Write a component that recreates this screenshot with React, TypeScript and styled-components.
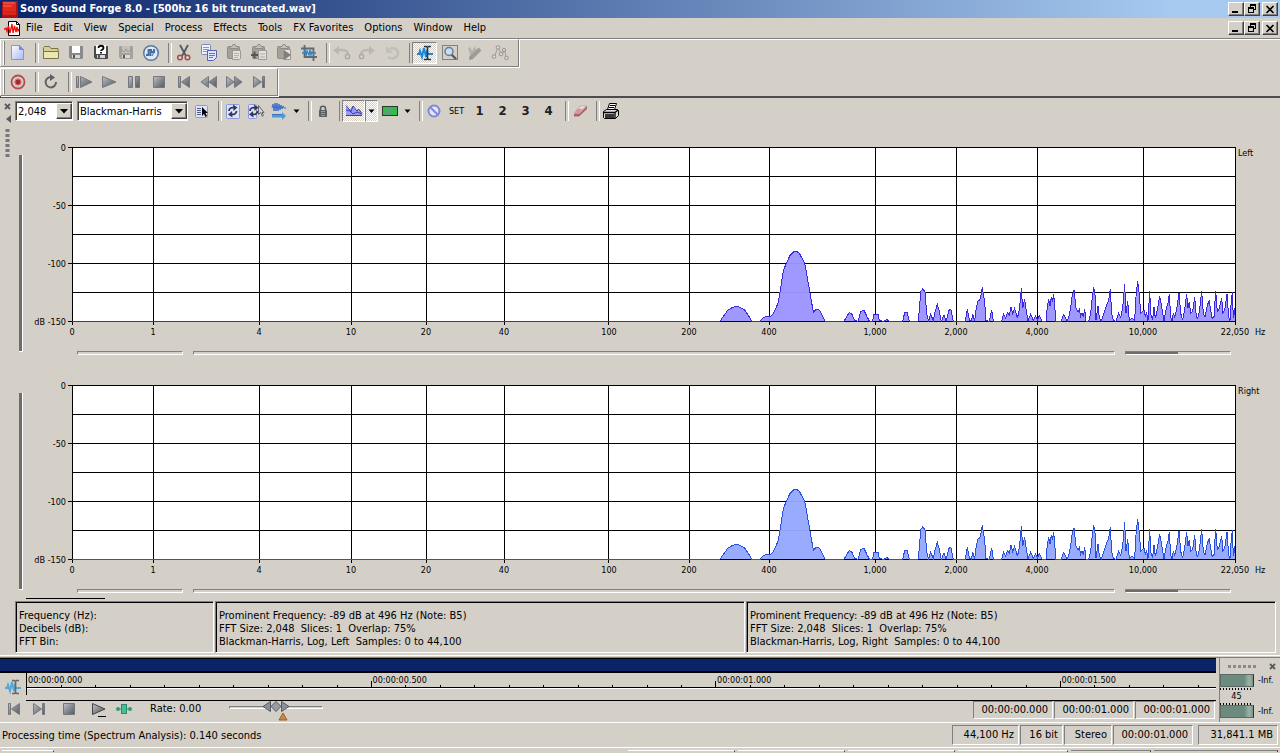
import React from "react";
import styled, { createGlobalStyle, css } from "styled-components";

const FACE = "#d4d0c8";
const SHADOW = "#808080";
const DARK = "#404040";

const GlobalStyle = createGlobalStyle`
  * { box-sizing: border-box; }
  body {
    margin: 0;
    background: ${FACE};
    color: #000;
    font: 11px/13px "DejaVu Sans Condensed", "DejaVu Sans", sans-serif;
  }
  button, input, select { font: inherit; color: inherit; margin: 0; padding: 0; border: 0; background: none; border-radius: 0; }
  svg { display: block; flex: none; }
`;

/* ---------- window frame ---------- */

const Window = styled.div`
  display: flex;
  flex-direction: column;
  min-height: 100vh;
  overflow: hidden;
`;

const TitleBar = styled.header`
  display: flex;
  align-items: center;
  gap: 2px;
  height: 18px;
  padding: 0 2px 0 1px;
  background: linear-gradient(to right, #0a246a, #a6caf0 92%);
  color: #fff;
`;

const Title = styled.h1`
  flex: 1;
  margin: 0;
  font: bold 11px/18px "DejaVu Sans Condensed", "DejaVu Sans", sans-serif;
  white-space: nowrap;
`;

const MenuBar = styled.nav`
  display: flex;
  align-items: center;
  height: 21px;
  padding: 0 2px 0 3px;
  border-bottom: 1px solid ${SHADOW};
`;

const MenuItem = styled.button`
  padding: 0 5px;
  line-height: 20px;
  white-space: nowrap;
`;

const MenuItems = styled.div`
  display: flex;
  flex: 1;
  gap: 1px;
`;

const CaptionButtons = styled.div`
  display: flex;
  color: #000;
`;

const CaptionButton = styled.button<{ $apart?: boolean }>`
  display: flex;
  align-items: center;
  justify-content: center;
  width: 16px;
  height: 14px;
  margin-left: ${(p) => (p.$apart ? 2 : 0)}px;
  background: ${FACE};
  border: 1px solid;
  border-color: #fff ${DARK} ${DARK} #fff;
  box-shadow: inset -1px -1px ${SHADOW};
`;

/* ---------- toolbars ---------- */

const ToolbarArea = styled.div`
  display: flex;
  flex-direction: column;
  align-items: flex-start;
  gap: 1px;
  border-bottom: 2px solid #4c4c4e;
  box-shadow: inset 0 1px #fff;
`;

const Toolbar = styled.div`
  display: flex;
  align-items: center;
  height: 28px;
  padding: 0 6px 0 2px;
  border: 1px solid;
  border-color: #fff ${SHADOW} ${SHADOW} #fff;
  box-shadow: 1px 1px #fff;
`;

const Grip = styled.span`
  width: 2px;
  height: 24px;
  border-left: 1px solid #fff;
  border-right: 1px solid ${SHADOW};
`;

const Separator = styled.span`
  flex: none;
  width: 8px;
  height: 20px;
  &::before {
    content: "";
    display: block;
    width: 2px;
    height: 100%;
    margin-left: 5px;
    border-left: 1px solid ${SHADOW};
    border-right: 1px solid #fff;
  }
`;

const pressed = css`
  border: 1px solid;
  border-color: ${SHADOW} #fff #fff ${SHADOW};
  background: repeating-conic-gradient(#fff 0 25%, ${FACE} 0 50%) 0 0 / 2px 2px;
`;

const ToolButton = styled.button<{ $width?: number; $pressed?: boolean }>`
  display: flex;
  flex: none;
  align-items: center;
  justify-content: center;
  width: ${(p) => p.$width ?? 25}px;
  height: 22px;
  ${(p) => p.$pressed && pressed}
`;

const SetLabel = styled.span`
  font-size: 9px;
`;

const PresetLabel = styled.span`
  font: bold 13px/16px "DejaVu Sans Condensed", "DejaVu Sans", sans-serif;
  color: #222;
`;

const AnalysisBar = styled.div`
  display: flex;
  align-items: center;
  height: 26px;
`;

const SelectBox = styled.div<{ $width: number }>`
  position: relative;
  width: ${(p) => p.$width}px;
  height: 20px;
  border: 1px solid;
  border-color: ${SHADOW} #fff #fff ${SHADOW};
  box-shadow: inset 1px 1px ${DARK};
  background: #fff;
  &:first-child { margin-right: 4px; }
`;

const Select = styled.select`
  width: 100%;
  height: 18px;
  padding: 0 0 0 2px;
  appearance: none;
  outline: none;
`;

const SelectArrow = styled.span`
  position: absolute;
  top: 1px;
  right: 0;
  display: flex;
  align-items: center;
  justify-content: center;
  width: 16px;
  height: 16px;
  background: ${FACE};
  border: 1px solid;
  border-color: #fff ${DARK} ${DARK} #fff;
  box-shadow: inset -1px -1px ${SHADOW};
  pointer-events: none;
`;

/* ---------- spectrum window ---------- */

const Spectrum = styled.main`
  display: flex;
  border-bottom: 1px solid #fff;
`;

const DockEdge = styled.div`
  display: flex;
  flex-direction: column;
  align-items: center;
  gap: 5px;
  width: 15px;
  padding-top: 5px;
`;

const SpectrumBody = styled.div`
  flex: 1;
  min-width: 0;
`;

const Channel = styled.section`
  display: flex;
  height: 238px;
`;

const VerticalRange = styled.input`
  appearance: none;
  flex: none;
  width: 4px;
  height: 197px;
  margin: 31px 49px 0 4px;
  background: #706c6c;
  border-right: 1px solid #fff;
  border-bottom: 1px solid #fff;
  &::-webkit-slider-thumb { appearance: none; width: 1px; height: 1px; }
`;

const PlotColumn = styled.div`
  flex: 1;
  min-width: 0;
  padding: 23px 45px 0 0;
`;

const Plot = styled.svg`
  width: 100%;
  height: 175px;
  overflow: visible;
  font-size: 9px;
`;

const RangeRow = styled.div`
  display: flex;
  gap: 10px;
  padding: 29px 4px 0 5px;
`;

const HorizontalRange = styled.input<{ $grow?: boolean; $filled?: number }>`
  appearance: none;
  flex: ${(p) => (p.$grow ? "1 1 0" : "0 0 106px")};
  min-width: 0;
  height: 4px;
  border: 1px solid;
  border-color: ${SHADOW} #fff #fff ${SHADOW};
  background: linear-gradient(to right, #706c6c ${(p) => p.$filled ?? 0}%, ${FACE} 0);
  &::-webkit-slider-thumb { appearance: none; width: 1px; height: 1px; }
`;

const InfoRow = styled.div`
  display: flex;
  gap: 1px;
  margin: 0 4px 2px 0;
`;

const InfoRule = styled.div`
  width: 79px;
  height: 1px;
  margin: -2px 0 2px 11px;
  background: #000;
`;

const InfoPane = styled.div<{ $fixed?: boolean }>`
  flex: ${(p) => (p.$fixed ? "0 0 199px" : "1 1 0")};
  height: 52px;
  padding: 7px 0 0 3px;
  border: 1px solid;
  border-color: ${SHADOW} #fff #fff ${SHADOW};
  box-shadow: inset 1px 1px #000;
  white-space: pre;
  overflow: hidden;
`;

/* ---------- data window strip ---------- */

const DataStrip = styled.section`
  display: flex;
  margin-top: 1px;
  border-top: 1px solid ${SHADOW};
  border-bottom: 1px solid #fff;
`;

const Timeline = styled.div`
  flex: 1;
  min-width: 0;
`;

const Overview = styled.div`
  height: 15px;
  background: #0a246a;
  border-top: 1px solid #000;
  border-bottom: 2px solid #000;
`;

const RulerRow = styled.div`
  display: flex;
  height: 28px;
`;

const RulerTool = styled.button`
  display: flex;
  align-items: center;
  justify-content: center;
  width: 26px;
`;

const RulerTrack = styled.div`
  flex: 1;
  min-width: 0;
  border-bottom: 1px solid #000;
`;

const Ruler = styled.svg`
  width: 100%;
  height: 27px;
  font-size: 9px;
`;

const Transport = styled.div`
  display: flex;
  align-items: flex-start;
  height: 21px;
  padding: 0 1px;
`;

const TransportButton = styled.button<{ $gap?: number }>`
  display: flex;
  align-items: center;
  justify-content: center;
  width: 25px;
  height: 15px;
  margin-right: ${(p) => p.$gap ?? 0}px;
`;

const Rate = styled.label`
  display: flex;
  flex: 1;
  gap: 28px;
  margin-left: 14px;
  line-height: 16px;
  white-space: nowrap;
`;

const RateSlider = styled.span`
  position: relative;
  width: 94px;
  height: 21px;
`;

const RateInput = styled.input`
  appearance: none;
  display: block;
  width: 94px;
  height: 3px;
  margin-top: 5px;
  border: 1px solid;
  border-color: ${SHADOW} #fff #fff ${SHADOW};
  &::-webkit-slider-thumb { appearance: none; width: 1px; height: 1px; }
`;

const RateThumb = styled.svg`
  position: absolute;
  left: 33px;
  top: 0;
  pointer-events: none;
`;

const Readout = styled.output<{ $width: number; $height?: number; $gap?: number }>`
  flex: none;
  width: ${(p) => p.$width}px;
  height: ${(p) => p.$height ?? 18}px;
  margin-left: ${(p) => p.$gap ?? 1}px;
  padding-right: 4px;
  border: 1px solid;
  border-color: ${SHADOW} #fff #fff ${SHADOW};
  line-height: ${(p) => (p.$height ?? 18) - 2}px;
  text-align: right;
  white-space: nowrap;
`;

const Meters = styled.aside`
  display: flex;
  flex-direction: column;
  width: 61px;
  margin-left: 3px;
  border-left: 1px solid ${SHADOW};
  font-size: 9px;
`;

const MeterHead = styled.div`
  display: flex;
  align-items: center;
  justify-content: space-between;
  height: 16px;
  padding: 0 4px 0 7px;
`;

const MeterRow = styled.div`
  display: flex;
  align-items: center;
  gap: 4px;
  height: 13px;
`;

const MeterBar = styled.span`
  width: 34px;
  height: 13px;
  background: linear-gradient(to right, #6d8a7e 72%, #9db3a8 88%, #7f9488);
  border: 1px solid;
  border-color: #5c6c64 #303030 #5c6c64 #5c6c64;
`;

const MeterScale = styled.div`
  width: 33px;
  height: 18px;
  padding-top: 4px;
  text-align: center;
  line-height: 11px;
  background:
    repeating-linear-gradient(to right, #000 0 1px, transparent 1px 3px) 0 1px / 100% 2px no-repeat,
    repeating-linear-gradient(to right, #000 0 1px, transparent 1px 3px) 0 100% / 100% 2px no-repeat;
`;

const StatusBar = styled.footer`
  display: flex;
  align-items: center;
  height: 25px;
  padding: 0 2px;
  border-bottom: 1px solid #fff;
`;

const StatusText = styled.span`
  flex: 1;
  white-space: nowrap;
`;

const Taskbar = styled.div`
  display: flex;
  gap: 3px;
  height: 4px;
  padding: 2px 2px 0 2px;
  overflow: hidden;
`;

const TaskSlot = styled.span<{ $width?: number; $tone?: "plain" | "alert" | "tray" }>`
  flex: ${(p) => (p.$width ? `0 0 ${p.$width}px` : "1 1 0")};
  height: 4px;
  ${(p) =>
    p.$tone &&
    css`
      background: ${p.$tone === "alert" ? "#f3dc7a" : FACE};
      border-top: 1px solid ${p.$tone === "plain" ? "#fff" : SHADOW};
      border-right: 1px solid ${DARK};
    `}
`;

/* ---------- icons ---------- */

type IconProps = { children: React.ReactNode; w?: number; h?: number };
const Icon = ({ children, w = 18, h = 18 }: IconProps) => (
  <svg width={w} height={h} viewBox={`0 0 ${w} ${h}`} fill="none" aria-hidden="true">
    {children}
  </svg>
);

const SharedDefs = styled.svg`
  position: absolute;
  width: 0;
  height: 0;
`;

const Gradients = () => (
  <SharedDefs aria-hidden="true">
    <defs>
      <linearGradient id="steel" x1="0" y1="0" x2="1" y2="1">
        <stop offset="0" stopColor="#c0c3c8" />
        <stop offset="0.5" stopColor="#868a90" />
        <stop offset="1" stopColor="#55585e" />
      </linearGradient>
      <linearGradient id="page" x1="0" y1="0" x2="1" y2="1">
        <stop offset="0" stopColor="#ffffff" />
        <stop offset="1" stopColor="#a9b8f4" />
      </linearGradient>
    </defs>
  </SharedDefs>
);

const steel = { fill: "url(#steel)", stroke: "#74777d", strokeWidth: 1 };

const AppIcon = () => (
  <Icon w={17} h={17}>
    <rect x="1" y="0" width="16" height="17" rx="1" fill="#b01010" />
    <rect x="2" y="1" width="13" height="13" fill="#e02a20" />
    <path d="M2 2h12M2 5h9" stroke="#f46a58" />
    <path d="M3 11h12M3 14h12" stroke="#c41812" />
  </Icon>
);
const DocIcon = () => (
  <Icon w={18} h={17}>
    <path d="M5.500 1.500h8l3 3v11h-11z" fill="#fff" stroke="#000" />
    <path d="M13.500 1.500v3h3" stroke="#000" />
    <path d="M1 9h2V7.500l1 4L5.500 6l1.500 7L9 4l1 9 1.500-7 1.500 6 1-5 1 4 1-2" stroke="#f01010" strokeWidth="1.300" />
  </Icon>
);
const Minimize = () => <Icon w={10} h={10}><path d="M1 8h6" stroke="#000" strokeWidth="2" /></Icon>;
const Restore = () => (
  <Icon w={10} h={10}>
    <g shapeRendering="crispEdges">
      <path d="M3 0h6v6H7V5h1V2H4v1H3z" fill="#000" />
      <path d="M1 3h6v6H1zM2 5v3h4V5z" fill="#000" fillRule="evenodd" />
    </g>
  </Icon>
);
const Close = () => <Icon w={10} h={9}><path d="M1.500 1l7 7M8.500 1l-7 7" stroke="#000" strokeWidth="1.600" /></Icon>;

const NewIcon = () => (
  <Icon>
    <path d="M2.500 1.500h8l4 4v10h-12z" fill="url(#page)" stroke="#8794cf" />
    <path d="M10.500 1.500v4h4" fill="#7b8fe0" stroke="#7688cf" />
  </Icon>
);
const OpenIcon = () => (
  <Icon>
    <path d="M1.500 14.500v-11l1-1h5l1.500 2h7v10z" fill="#d8cf96" stroke="#7c7444" />
    <path d="M1.500 7.500h15v7h-15z" fill="#ece5b4" stroke="#7c7444" />
  </Icon>
);
const Floppy = ({ color = "#8a8a8a", label = "#fff" }: { color?: string; label?: string }) => (
  <>
    <path d="M2.500 2.500h13v12h-12l-1-1z" fill={color} stroke={color} />
    <path d="M5 2h8v7H5z" fill={label} />
    <path d="M5 11h8v3H5z" fill="#d8d8d8" />
    <path d="M6 11h2v3H6z" fill="#555" />
  </>
);
const SaveIcon = () => <Icon><Floppy /></Icon>;
const SaveAsIcon = () => (
  <Icon>
    <Floppy color="#4a4a4a" />
    <rect x="4" y="1" width="10" height="9" fill="#fff" />
    <path d="M6.500 4c0-3 5-3 5 0 0 2-2.500 1.500-2.500 3M9 8v1.500" stroke="#000" strokeWidth="1.800" />
  </Icon>
);
const SaveAllIcon = () => (
  <Icon>
    <Floppy color="#a4a29e" label="#c4c1ba" />
    <path d="M3 7l2-1 2 2 2-3 2 3 2-2 2 1" stroke="#989692" />
  </Icon>
);
const RenderIcon = () => (
  <Icon>
    <circle cx="9" cy="9" r="7.300" fill="#dfe8f4" stroke="#5878a0" strokeWidth="1.500" />
    <path d="M4 11h2.500V6H10M8.500 12V8H12V5" stroke="#3f6ea5" strokeWidth="1.800" />
    <path d="M10 12l3-6" stroke="#3f6ea5" />
  </Icon>
);
const CutIcon = () => (
  <Icon>
    <path d="M5 1l6 11M13 1L7 12" stroke="#55585e" strokeWidth="1.800" />
    <circle cx="5" cy="13.500" r="2.300" stroke="#a0504a" strokeWidth="1.500" />
    <circle cx="12.500" cy="13.500" r="2.300" stroke="#a0504a" strokeWidth="1.500" />
  </Icon>
);
const CopyIcon = () => (
  <Icon>
    <rect x="1.500" y="0.500" width="9" height="10" rx="1" fill="#eef1ff" stroke="#7c88b8" />
    <path d="M3 3.500h6M3 5.500h6M3 7.500h4" stroke="#8a96c8" />
    <path d="M7.500 6.500h9v7l-3 3h-6z" fill="#dfe5ff" stroke="#5566b0" />
    <path d="M9 9.500h6M9 11.500h6M9 13.500h4" stroke="#6677c0" />
  </Icon>
);
const Clipboard = () => (
  <>
    <rect x="2.500" y="2.500" width="12" height="12" rx="1" fill="#a5a29c" stroke="#8f8c87" />
    <path d="M5 4.500v-2h2l1-2h2l1 2h2v2z" fill="#c5c2bb" stroke="#8f8c87" />
  </>
);
const PasteIcon = () => (
  <Icon><Clipboard /><path d="M7.500 6.500h8v8l-1 1h-7z" fill="#e4e1da" stroke="#9b9893" /><path d="M9 9.500h5M9 11.500h5M9 13.500h4" stroke="#b5b2ac" /></Icon>
);
const PasteMixIcon = () => (
  <Icon><Clipboard /><path d="M8.500 6.500h8v9h-8z" fill="#e4e1da" stroke="#9b9893" /><path d="M10 10h5M10 13h5" stroke="#aaa" /><path d="M1 11h7M4.500 7.500v7" stroke="#555" strokeWidth="2" /></Icon>
);
const PastePlayIcon = () => (
  <Icon><Clipboard /><path d="M8.500 5.500h7v10h-7z" fill="#e4e1da" stroke="#9b9893" /><path d="M9 6l7 5-7 5z" fill="#807e7a" /></Icon>
);
const TrimIcon = () => (
  <Icon>
    <path d="M4.500 1v12H17M1 4.500h12.500V17" stroke="#66696e" strokeWidth="1.800" />
    <path d="M2 9h2l1-3 1 6 1-5 2 4 1-5 1 5 1-3 1 1h3" stroke="#2d86c4" strokeWidth="1.300" />
  </Icon>
);
const UndoIcon = () => (
  <Icon>
    <path d="M5 6h4c4 0 6 2 6 5" stroke="#bbb8b1" strokeWidth="2.600" />
    <path d="M0 6.500L6 2v9z" fill="#bbb8b1" />
    <circle cx="14.500" cy="12.500" r="2.200" fill={FACE} stroke="#aaa7a1" strokeWidth="1.300" />
  </Icon>
);
const RedoIcon = () => (
  <Icon>
    <path d="M12 6H9c-4 0-6 2-6 5" stroke="#bbb8b1" strokeWidth="2.600" />
    <path d="M17 6.500L11 2v9z" fill="#bbb8b1" />
    <circle cx="3.500" cy="12.500" r="2.200" fill={FACE} stroke="#aaa7a1" strokeWidth="1.300" />
  </Icon>
);
const RepeatIcon = () => (
  <Icon><path d="M7 5c4-2 8 0 8 4 0 5-6 7-10 4" stroke="#c2bfb8" strokeWidth="2.600" /><path d="M3 2v7h7z" fill="#c2bfb8" /></Icon>
);
const EditToolIcon = ({ faded = false }: { faded?: boolean }) => (
  <Icon>
    <path d="M1 10h2l1-3 2 6 2-9 2 9 1-5 1 2h5" stroke={faded ? "#56a8d8" : "#1f86d8"} strokeWidth="2" />
    <path d="M8 2.500h2.500l1 1 1-1H15M11.500 3v12M8 15.500h2.500l1-1 1 1H15" stroke={faded ? "#666" : "#26394a"} strokeWidth="1.600" />
  </Icon>
);
const MagnifyIcon = () => (
  <Icon>
    <rect x="1.500" y="1.500" width="15" height="14" stroke="#333" strokeDasharray="1 1" />
    <path d="M10 10l5 5" stroke="#555b68" strokeWidth="2.400" />
    <circle cx="8" cy="7.500" r="4" fill="#c6ddf8" stroke="#6c7890" strokeWidth="1.500" />
  </Icon>
);
const PencilIcon = () => (
  <Icon>
    <path d="M2 4l2-1 2 4 3-5 1 4 3-2-7 9-3 1 1-4z" fill="#b5b2ac" />
    <path d="M5 14l9-9" stroke="#a09d98" strokeWidth="4" />
    <path d="M3 16l1-4 3 3z" fill="#96938e" />
  </Icon>
);
const EnvelopeIcon = () => (
  <Icon>
    <path d="M3 13L7 4l4 6 3-3 1 7" stroke="#a09d98" />
    <g fill="#ddd9d1" stroke="#96938e">
      <circle cx="3" cy="12.500" r="1.800" /><circle cx="7" cy="3.500" r="1.800" /><circle cx="10" cy="10" r="1.800" />
      <circle cx="13" cy="6" r="1.600" /><circle cx="15.500" cy="14" r="1.800" />
    </g>
  </Icon>
);

const RecordIcon = () => (
  <Icon><circle cx="9" cy="9" r="6.500" stroke="#b84a50" strokeWidth="1.800" /><circle cx="9" cy="9" r="3.200" fill="#a82830" stroke="#d98a8c" /></Icon>
);
const LoopIcon = () => (
  <Icon><path d="M9 4A5.200 5.200 0 1 0 14 9" stroke="#5e6166" strokeWidth="2" /><path d="M8 1l5 3.500L8 8z" fill="#5e6166" /></Icon>
);
const PlayAllIcon = () => <Icon><path d="M1.500 3.500h2v11h-2zM5.500 3.500L17 9 5.500 14.500z" {...steel} /></Icon>;
const PlayIcon = () => <Icon><path d="M2.500 3.500L16 9 2.500 14.500z" {...steel} /></Icon>;
const PauseIcon = () => <Icon><path d="M3.500 3.500h4v11h-4zM10.500 3.500h4v11h-4z" {...steel} /></Icon>;
const StopIcon = () => <Icon><path d="M3.500 3.500h11v11h-11z" {...steel} /></Icon>;
const StartIcon = () => <Icon><path d="M3.500 3.500h2v11h-2zM14.500 3.500v11L6.500 9z" {...steel} /></Icon>;
const RewindIcon = () => <Icon><path d="M8.500 3.500v11L1 9zM16.500 3.500v11L9 9z" {...steel} /></Icon>;
const ForwardIcon = () => <Icon><path d="M1.500 3.500v11L9 9zM9.500 3.500v11L17 9z" {...steel} /></Icon>;
const EndIcon = () => <Icon><path d="M12.500 3.500h2v11h-2zM3.500 3.500v11L11.500 9z" {...steel} /></Icon>;
const PlayOnceIcon = () => (
  <Icon><path d="M2.500 3.500L15 9 2.500 14.500z" {...steel} stroke="#444" /><path d="M8 16.500h8" stroke="#000" /></Icon>
);
const ScrubIcon = () => (
  <Icon>
    <path d="M3 9h12" stroke="#2f9a78" /><circle cx="3" cy="9" r="2" fill="#2f9a78" /><circle cx="15" cy="9" r="2" fill="#2f9a78" />
    <rect x="6.500" y="4.500" width="5" height="9" fill="#42c09a" stroke="#2f8a6c" />
  </Icon>
);

const SettingsIcon = () => (
  <Icon>
    <rect x="3.500" y="3.500" width="12" height="12" rx="1" fill="#dde2ff" stroke="#8b97dd" />
    <path d="M5 6.500h4M5 8.500h4M5 10.500h4M5 12.500h4" stroke="#555c88" />
    <path d="M10 5v9l2-2 1.500 3 1.500-1-1.500-3H16z" fill="#000" />
  </Icon>
);
const CycleArrows = () => (
  <>
    <path d="M5 9c0-3 3-4 5-3M12.500 9c0 3-3 4-5 3" stroke="#333a50" strokeWidth="1.800" />
    <path d="M9 2.500l4.500 3L9.500 9zM8.500 15.500L4 12.500 8 9z" fill="#333a50" />
  </>
);
const RefreshIcon = () => (
  <Icon><rect x="2.500" y="2.500" width="13" height="14" rx="1" fill="#dde2ff" stroke="#8b97dd" /><CycleArrows /></Icon>
);
const AutoRefreshIcon = () => (
  <Icon>
    <rect x="1.500" y="2.500" width="8" height="14" rx="1" fill="#dde2ff" stroke="#8b97dd" />
    <g transform="translate(-2 0)"><CycleArrows /></g>
    <path d="M11.500 3.500v9l2-2 2 4 1-1-1.500-3h2z" fill="#d8d5cf" stroke="#66646a" />
  </Icon>
);
const RealtimeIcon = () => (
  <Icon>
    <path d="M2 6l1-4 1 7 1-8 1 8 1-8 1 8 1-7 1 6 1-5 1 4 1-3 1 2h2" stroke="#3a6cc8" />
    <path d="M2 12.500h10v-2.500l4 4-4 4v-2.500H2z" fill="#4f9ade" />
    <path d="M2 12.500h10" stroke="#3976bd" />
  </Icon>
);
const LockIcon = () => (
  <Icon><path d="M6.500 9V6.500c0-3 5-3 5 0V9" stroke="#55585c" strokeWidth="1.600" /><rect x="5" y="8" width="8" height="7" rx="1" fill="#5b5e63" /><path d="M7 9.500h4M7 11.500h4M7 13.500h4" stroke="#999ca0" /></Icon>
);
const GraphIcon = () => (
  <Icon>
    <path d="M1 14V4l4 4 2-4 5 5 2-1 3 4v2z" fill="#9c9bf2" />
    <path d="M1 3.500l5 6 2-5.500 4 5 1.500-2L17 11.500M1 8l4 1 3 3 4-2 5 2M1 13.500h16" stroke="#3a3aae" />
  </Icon>
);
const SonogramIcon = () => (
  <Icon>
    <rect x="1.500" y="4.500" width="15" height="9" fill="#2fc04a" stroke="#2a3a2a" />
    <path d="M3 11.500l3-2 2 1 3-3 4-1M5 12.500l4-1 2-2h2M4 7.500l4-1" stroke="#8a78a8" />
  </Icon>
);
const CaretIcon = () => <Icon w={7} h={6}><path d="M0.500 1.500h6L3.500 5z" fill="#000" /></Icon>;
const NoneIcon = () => <Icon><circle cx="9" cy="9" r="5.500" fill="#e4e6fa" stroke="#8088d8" strokeWidth="2" /><path d="M5 5l8 8" stroke="#8088d8" strokeWidth="2" /></Icon>;
const EraserIcon = () => (
  <Icon><path d="M2.500 12l3.500-5h5.500L8 12z" fill="#dc949c" /><path d="M6 7l4-3h6l-4.500 3z" fill="#f2eaec" stroke="#c0a8ae" /><path d="M8 12l8-8v3l-8 7.500H3V12z" fill="#a8646e" /></Icon>
);
const PrintIcon = () => (
  <Icon>
    <path d="M5.500 7.500l2-6h7l-2 6z" fill="#fff" stroke="#000" />
    <path d="M8 3.500h5M7 5.500h5" stroke="#000" />
    <path d="M1.500 9.500l3-2h11l1 1v5l-3 3h-11l-1-1z" fill="#ddd" stroke="#000" />
    <path d="M2 10.500h11v6M13 10.500l3-2.500M3 13h9M3 15h9" stroke="#000" strokeWidth="1.300" />
  </Icon>
);

/* ---------- chart ---------- */

// Analysed levels as "x,y" pairs at three units per pixel; y grows down to FLOOR.
const FLOOR = 274;
const LOW_BAND =
  "60,274 68,262 84,240 96,233 110,229 122,233 134,240 146,258 156,274 180,274 190,263 198,259 214,258 222,247 234,220 238,200 250,122 258,102 270,76 282,64 290,64 298,70 314,100 318,120 340,246 346,240 352,237 360,243 374,272 376,274 432,274 440,260 448,248 456,253 464,271 474,274 482,245 492,241 500,258 508,273 518,273 522,253 534,253 538,272 552,274 560,268 568,274 608,274 614,248 622,248 628,274 654,274 658,240 662,185 668,177 675,185 680,250 686,274 692,252 700,273 704,250 712,222 718,245 724,274 732,255 738,274 748,238 753,240 760,274";
const MID_BAND = "796,274 802,238 808,270 814,274 818,252 824,272 828,240 834,212 838,212";
const HIGH_BAND =
  "62,200 67,172 74,215 78,272 88,274 95,240 100,274 125,274 131,252 137,265 142,248 148,255 153,232 158,252 164,235 172,265 178,240 184,175 188,235 194,208 200,250 204,272 212,252 220,272 226,258 232,270 238,258 246,274 258,274 262,230 266,208 270,228 274,200 277,215 281,193 285,240 288,274 304,274 310,254 316,262 322,274 326,262 332,235 336,200 342,180 348,235 354,245 358,238 362,258 366,248 370,260 374,236 378,274 386,274 392,250 397,200 401,172 405,195 408,270 414,228 418,265 424,274 432,250 440,225 446,210 451,178 455,250 460,272 468,274 476,250 482,262 488,235 494,163 498,250 503,213 508,272 516,265 524,272 528,200 533,153 538,195 542,250 548,245 552,240 556,258 560,248 564,272 569,184 573,255 578,270 582,230 586,265 592,240 599,199 604,225 612,272 620,230 624,220 628,193 632,260 636,274 640,250 644,262 650,240 657,188 662,250 668,270 674,240 680,192 684,235 688,215 692,250 698,245 704,202 708,250 712,268 718,245 725,184 730,250 735,262 742,225 748,213 752,240 756,265 762,260 767,184 772,245 778,235 785,204 789,250 794,240 801,192 806,260 810,272 814,210 817,187 820,265 824,235 826,274";

const band = (points: string, start: number) =>
  points.split(" ").map((pair) => {
    const [x, y] = pair.split(",").map(Number);
    return `${x + start} ${523 - (FLOOR - y)}`;
  });

const SPECTRUM_PATH = `M0 523L${[
  ...band(LOW_BAND, 1884),
  ...band(MID_BAND, 1884),
  ...band(HIGH_BAND, 2664),
].join("L")}L3489 523`;

const SPAN = 1163;
const FREQUENCIES: [number, string][] = [
  [0, "0"], [81, "1"], [187, "4"], [279, "10"], [354, "20"], [432, "40"], [537, "100"],
  [617, "200"], [697, "400"], [803, "1,000"], [884, "2,000"], [965, "4,000"], [1071, "10,000"], [1163, "22,050"],
];
const LEVELS: [number, string][] = [
  [0, "0"], [29, ""], [58, "-50"], [87, ""], [116, "-100"], [145, ""], [174, "dB -150"],
];

const ChannelChart = ({ name, fill, stroke }: { name: string; fill: string; stroke: string }) => (
  <Channel aria-label={`${name} channel`}>
    <VerticalRange type="range" aria-label={`${name} level zoom`} />
    <PlotColumn>
      <Plot role="img" aria-label={`${name} spectrum`}>
        <rect width="100%" height="174" fill="#fff" />
        <g stroke="#000" shapeRendering="crispEdges">
          {FREQUENCIES.map(([x]) => (
            <line key={x} x1={`${(x / SPAN) * 100}%`} x2={`${(x / SPAN) * 100}%`} y1="0" y2="178" />
          ))}
          {LEVELS.map(([y, label]) => (
            <line key={y} x1={label ? -4 : 0} x2="100%" y1={y + 0.5} y2={y + 0.5} />
          ))}
        </g>
        <svg width="100%" height="175" viewBox="0 0 3489 525" preserveAspectRatio="none">
          <path d={SPECTRUM_PATH} fill={fill} fillOpacity="0.96" stroke={stroke} vectorEffect="non-scaling-stroke" shapeRendering="crispEdges" />
        </svg>
        {FREQUENCIES.map(([x, label]) => (
          <text key={x} x={`${(x / SPAN) * 100}%`} y="188" textAnchor="middle">{label}</text>
        ))}
        {LEVELS.map(([y, label]) => label && (
          <text key={y} x="-6" y={y + 4} textAnchor="end">{label}</text>
        ))}
        <text x="100%" dx="20" y="188">Hz</text>
        <text x="100%" dx="3" y="9">{name}</text>
      </Plot>
      <RangeRow>
        <HorizontalRange type="range" aria-label={`${name} position`} />
        <HorizontalRange type="range" $grow aria-label={`${name} frequency scroll`} />
        <HorizontalRange type="range" $filled={50} aria-label={`${name} frequency zoom`} />
      </RangeRow>
    </PlotColumn>
  </Channel>
);

const MAJOR = 28.95;
const TIMES = ["00:00:00.000", "00:00:00.500", "00:00:01.000", "00:00:01.500"];

const TimeRuler = () => (
  <Ruler role="img" aria-label="Time ruler">
    <g stroke="#000" shapeRendering="crispEdges">
      <line x1="0.500" x2="0.500" y1="0" y2="22" />
      <line x1="0" x2="100%" y1="14.500" y2="14.500" />
      {Array.from({ length: 35 }, (_, i) => (
        <line
          key={i}
          x1={`${(i * MAJOR) / 10 + 0.08}%`}
          x2={`${(i * MAJOR) / 10 + 0.08}%`}
          y1={i % 10 === 0 ? 8 : 12}
          y2="15"
        />
      ))}
    </g>
    <line x1="1" x2="100%" y1="15.500" y2="15.500" stroke="#fff" />
    {TIMES.map((t, i) => (
      <text key={t} x={`${i * MAJOR}%`} dx="2" y="10">{t}</text>
    ))}
  </Ruler>
);

/* ---------- assembled parts ---------- */

type Tool = [label: string, Glyph: React.ComponentType, isPressed?: boolean];

const FILE_TOOLS: Tool[][] = [
  [["New", NewIcon]],
  [["Open", OpenIcon], ["Save", SaveIcon], ["Save As", SaveAsIcon], ["Save All", SaveAllIcon], ["Render As", RenderIcon]],
  [["Cut", CutIcon], ["Copy", CopyIcon], ["Paste", PasteIcon], ["Mix", PasteMixIcon], ["Play Clipboard", PastePlayIcon], ["Trim", TrimIcon]],
  [["Undo", UndoIcon], ["Redo", RedoIcon], ["Repeat", RepeatIcon]],
  [["Edit Tool", EditToolIcon, true], ["Magnify Tool", MagnifyIcon], ["Pencil Tool", PencilIcon], ["Envelope Tool", EnvelopeIcon]],
];
const PLAY_TOOLS: Tool[][] = [
  [["Record", RecordIcon]],
  [["Loop Playback", LoopIcon]],
  [["Play All", PlayAllIcon], ["Play", PlayIcon], ["Pause", PauseIcon], ["Stop", StopIcon], ["Go to Start", StartIcon], ["Rewind", RewindIcon], ["Forward", ForwardIcon], ["Go to End", EndIcon]],
];

const ToolGroups = ({ groups }: { groups: Tool[][] }) => (
  <Toolbar role="toolbar">
    <Grip />
    {groups.map((group, i) => (
      <React.Fragment key={i}>
        {i > 0 && <Separator />}
        {group.map(([label, Glyph, on]) => (
          <ToolButton key={label} aria-label={label} $pressed={on}><Glyph /></ToolButton>
        ))}
      </React.Fragment>
    ))}
  </Toolbar>
);

const Caption = () => (
  <CaptionButtons>
    <CaptionButton aria-label="Minimize"><Minimize /></CaptionButton>
    <CaptionButton aria-label="Restore"><Restore /></CaptionButton>
    <CaptionButton $apart aria-label="Close"><Close /></CaptionButton>
  </CaptionButtons>
);

const Dropdown = ({ label, value, width }: { label: string; value: string; width: number }) => (
  <SelectBox $width={width}>
    <Select aria-label={label} defaultValue={value}><option>{value}</option></Select>
    <SelectArrow><Icon w={8} h={5}><path d="M0 0h8L4 4.500z" fill="#000" /></Icon></SelectArrow>
  </SelectBox>
);

const MENUS = ["File", "Edit", "View", "Special", "Process", "Effects", "Tools", "FX Favorites", "Options", "Window", "Help"];

const SmallClose = () => <Icon w={7} h={7}><path d="M1 1l5 5M6 1L1 6" stroke="#5a5a60" strokeWidth="1.800" /></Icon>;

export default function App() {
  return (
    <Window>
      <GlobalStyle />
      <Gradients />
      <TitleBar>
        <AppIcon />
        <Title>Sony Sound Forge 8.0 - [500hz 16 bit truncated.wav]</Title>
        <Caption />
      </TitleBar>
      <MenuBar>
        <DocIcon />
        <MenuItems>{MENUS.map((m) => <MenuItem key={m}>{m}</MenuItem>)}</MenuItems>
        <Caption />
      </MenuBar>
      <ToolbarArea>
        <ToolGroups groups={FILE_TOOLS} />
        <ToolGroups groups={PLAY_TOOLS} />
      </ToolbarArea>

      <Spectrum>
        <DockEdge>
          <SmallClose />
          <Icon w={6} h={8}><path d="M6 0v8L1 4z" fill="#5a5a60" /></Icon>
          <Icon w={5} h={29}><path d="M2.500 1v28" stroke="#77777c" strokeWidth="4" strokeDasharray="3 2" /></Icon>
        </DockEdge>
        <SpectrumBody>
          <AnalysisBar>
            <Dropdown label="FFT size" value="2,048" width={58} />
            <Dropdown label="Smoothing window" value="Blackman-Harris" width={111} />
            <ToolButton aria-label="Settings"><SettingsIcon /></ToolButton>
            <Separator />
            <ToolButton $width={23} aria-label="Refresh"><RefreshIcon /></ToolButton>
            <ToolButton $width={23} aria-label="Auto refresh"><AutoRefreshIcon /></ToolButton>
            <ToolButton $width={23} aria-label="Real time"><RealtimeIcon /></ToolButton>
            <ToolButton $width={13} aria-label="Real time options"><CaretIcon /></ToolButton>
            <Separator />
            <ToolButton $width={23} aria-label="Sync graphs"><LockIcon /></ToolButton>
            <Separator />
            <ToolButton $width={23} $pressed aria-label="Spectrum graph"><GraphIcon /></ToolButton>
            <ToolButton $width={13} $pressed aria-label="Graph options"><CaretIcon /></ToolButton>
            <ToolButton $width={23} aria-label="Sonogram"><SonogramIcon /></ToolButton>
            <ToolButton $width={13} aria-label="Sonogram options"><CaretIcon /></ToolButton>
            <Separator />
            <ToolButton $width={23} aria-label="No snapshots"><NoneIcon /></ToolButton>
            <ToolButton $width={23}><SetLabel>SET</SetLabel></ToolButton>
            {["1", "2", "3", "4"].map((n) => (
              <ToolButton key={n} $width={23}><PresetLabel>{n}</PresetLabel></ToolButton>
            ))}
            <Separator />
            <ToolButton $width={23} aria-label="Erase"><EraserIcon /></ToolButton>
            <Separator />
            <ToolButton $width={23} aria-label="Print"><PrintIcon /></ToolButton>
          </AnalysisBar>
          <ChannelChart name="Left" fill="#9a94ff" stroke="#3a28e0" />
          <ChannelChart name="Right" fill="#94a8ff" stroke="#2850e0" />
          <InfoRule />
          <InfoRow>
            <InfoPane $fixed>{"Frequency (Hz):\nDecibels (dB):\nFFT Bin:"}</InfoPane>
            <InfoPane>{"Prominent Frequency: -89 dB at 496 Hz (Note: B5)\nFFT Size: 2,048  Slices: 1  Overlap: 75%\nBlackman-Harris, Log, Left  Samples: 0 to 44,100"}</InfoPane>
            <InfoPane>{"Prominent Frequency: -89 dB at 496 Hz (Note: B5)\nFFT Size: 2,048  Slices: 1  Overlap: 75%\nBlackman-Harris, Log, Right  Samples: 0 to 44,100"}</InfoPane>
          </InfoRow>
        </SpectrumBody>
      </Spectrum>

      <DataStrip>
        <Timeline>
          <Overview />
          <RulerRow>
            <RulerTool aria-label="Edit tool"><EditToolIcon faded /></RulerTool>
            <RulerTrack><TimeRuler /></RulerTrack>
          </RulerRow>
          <Transport>
            <TransportButton aria-label="Go to start"><StartIcon /></TransportButton>
            <TransportButton $gap={5} aria-label="Go to end"><EndIcon /></TransportButton>
            <TransportButton $gap={5} aria-label="Stop"><StopIcon /></TransportButton>
            <TransportButton aria-label="Play normal"><PlayOnceIcon /></TransportButton>
            <TransportButton aria-label="Scrub"><ScrubIcon /></TransportButton>
            <Rate>
              Rate: 0.00
              <RateSlider>
                <RateInput type="range" />
                <RateThumb width="28" height="21" viewBox="0 0 28 21" aria-hidden="true">
                  <path d="M8.500 0.500v10L1 5.500zM19.500 0.500v10l7.500-5z" fill="#8d9096" stroke="#55585e" />
                  <path d="M14 0.500L19 5.500l-5 5-5-5z" fill="#9a9da3" stroke="#55585e" />
                  <path d="M21 12l4 7h-8z" fill="#c88a48" stroke="#946028" />
                </RateThumb>
              </RateSlider>
            </Rate>
            <Readout $width={80}>00:00:00.000</Readout>
            <Readout $width={80}>00:00:01.000</Readout>
            <Readout $width={80}>00:00:01.000</Readout>
          </Transport>
        </Timeline>
        <Meters>
          <MeterHead>
            <Icon w={30} h={5}><path d="M1 2.500h29" stroke="#8a8a8e" strokeWidth="3" strokeDasharray="3 2" /></Icon>
            <SmallClose />
          </MeterHead>
          <MeterRow><MeterBar />-Inf.</MeterRow>
          <MeterScale>45</MeterScale>
          <MeterRow><MeterBar />-Inf.</MeterRow>
        </Meters>
      </DataStrip>

      <StatusBar>
        <StatusText>Processing time (Spectrum Analysis): 0.140 seconds</StatusText>
        <Readout $width={67} $height={20}>44,100 Hz</Readout>
        <Readout $width={43} $height={20}>16 bit</Readout>
        <Readout $width={48} $height={20}>Stereo</Readout>
        <Readout $width={80} $height={20}>00:00:01.000</Readout>
        <Readout $width={80} $height={20} $gap={5}>31,841.1 MB</Readout>
      </StatusBar>
      <Taskbar>
        <TaskSlot $width={52} $tone="plain" />
        <TaskSlot />
        <TaskSlot $width={107} $tone="plain" />
        <TaskSlot $width={107} $tone="plain" />
        <TaskSlot $width={107} $tone="plain" />
        <TaskSlot $width={110} $tone="plain" />
        <TaskSlot $width={80} $tone="alert" />
        <TaskSlot $width={124} $tone="tray" />
      </Taskbar>
    </Window>
  );
}
